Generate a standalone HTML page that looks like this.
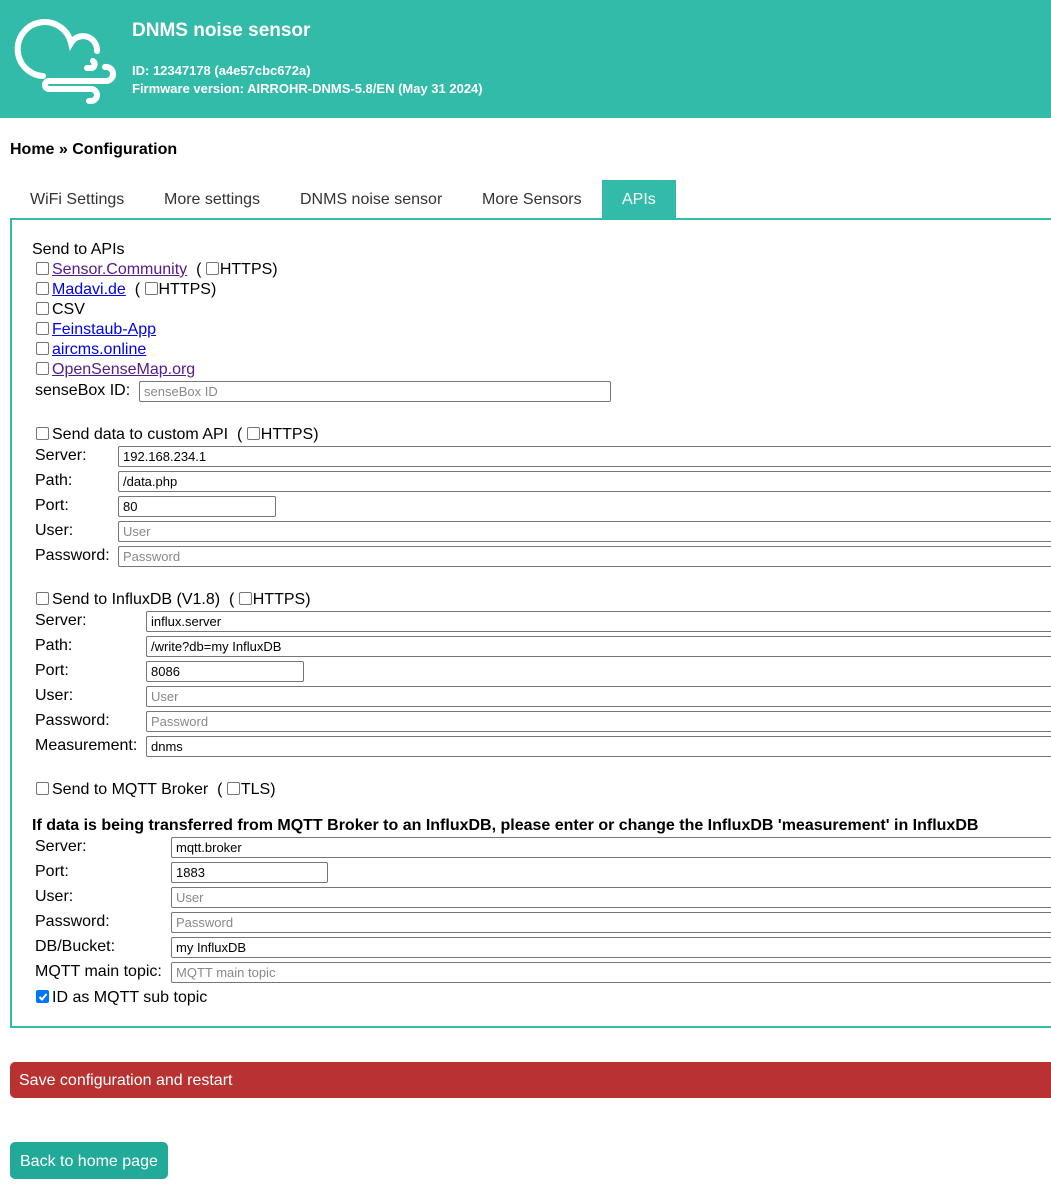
<!DOCTYPE html>
<html><head><meta charset="utf-8"><style>
*{margin:0;padding:0;box-sizing:border-box}
body{width:1051px;height:1199px;overflow:hidden;background:#fff;font-family:"Liberation Sans",Arial,sans-serif;font-size:16px;color:#000;position:relative}
.a{position:absolute;white-space:nowrap;line-height:20px;margin-top:2px}
.hd{position:absolute;left:0;top:0;width:1051px;height:118px;background:#33bbaa}
.cb{display:inline-block;width:13px;height:13px;border:1px solid #767676;border-radius:2px;background:#fff;vertical-align:-1px;margin-right:3px}
.in{position:absolute;height:21px;border:1px solid #767676;border-radius:2px;font-size:13px;line-height:19px;padding-left:4px;background:#fff;color:#000;white-space:nowrap}
.ph{color:#888}
a{color:#0000ee;text-decoration:underline}
a.v{color:#551a8b}
</style></head><body>
<div class="hd"></div>
<svg style="position:absolute;left:0;top:0" width="130" height="118" viewBox="0 0 130 118" fill="none" stroke="#fff" stroke-width="6" stroke-linecap="round">
<g transform="translate(5,3)">
<path d="M38,73 A27,27 0 1 1 66,40 A14,14 0 0 1 92,48"/>
<path d="M82,65 H87 A4,4 0 0 0 88,58"/>
<path d="M44,78 H102 A7,7 0 1 0 100,64"/>
<path d="M44,86 H86 A6,6 0 0 1 86,98 H84"/>
<path d="M44,78 A4,4 0 0 0 44,86"/>
</g>
</svg>
<div class="a" style="left:132px;top:19px;color:#fff;font-weight:bold;font-size:19px">DNMS noise sensor</div>
<div class="a" style="left:132px;top:59px;color:#fff;font-weight:bold;font-size:13px">ID: 12347178 (a4e57cbc672a)</div>
<div class="a" style="left:132px;top:77px;color:#fff;font-weight:bold;font-size:13px">Firmware version: AIRROHR-DNMS-5.8/EN (May 31 2024)</div>
<div class="a" style="left:10px;top:138px;font-weight:bold">Home » Configuration</div>

<div class="a" style="left:30px;top:188px;color:#333">WiFi Settings</div>
<div class="a" style="left:164px;top:188px;color:#333">More settings</div>
<div class="a" style="left:300px;top:188px;color:#333">DNMS noise sensor</div>
<div class="a" style="left:482px;top:188px;color:#333">More Sensors</div>
<div style="position:absolute;left:602px;top:180px;width:74px;height:38px;background:#33bbaa"></div>
<div class="a" style="left:622px;top:188px;color:#fff">APIs</div>
<div style="position:absolute;left:10px;top:218px;width:1060px;height:810px;border:2px solid #33bbaa"></div>

<div class="a" style="left:32px;top:238px">Send to APIs</div>
<div class="a" style="left:36px;top:258px"><span class="cb"></span><a class="v">Sensor.Community</a>&nbsp; ( <span class="cb" style="margin-right:1px"></span>HTTPS)</div>
<div class="a" style="left:36px;top:278px"><span class="cb"></span><a>Madavi.de</a>&nbsp; ( <span class="cb" style="margin-right:1px"></span>HTTPS)</div>
<div class="a" style="left:36px;top:298px"><span class="cb"></span>CSV</div>
<div class="a" style="left:36px;top:318px"><span class="cb"></span><a>Feinstaub-App</a></div>
<div class="a" style="left:36px;top:338px"><span class="cb"></span><a>aircms.online</a></div>
<div class="a" style="left:36px;top:358px"><span class="cb"></span><a class="v">OpenSenseMap.org</a></div>
<div class="a" style="left:35px;top:379px">senseBox ID:</div>
<div class="in ph" style="left:139px;top:381px;width:472px">senseBox ID</div>

<div class="a" style="left:36px;top:423px"><span class="cb"></span>Send data to custom API&nbsp; ( <span class="cb" style="margin-right:1px"></span>HTTPS)</div>
<div class="a" style="left:35px;top:444px">Server:</div><div class="in" style="left:118px;top:446px;width:950px">192.168.234.1</div>
<div class="a" style="left:35px;top:469px">Path:</div><div class="in" style="left:118px;top:471px;width:950px">/data.php</div>
<div class="a" style="left:35px;top:494px">Port:</div><div class="in" style="left:118px;top:496px;width:158px">80</div>
<div class="a" style="left:35px;top:519px">User:</div><div class="in ph" style="left:118px;top:521px;width:950px">User</div>
<div class="a" style="left:35px;top:544px">Password:</div><div class="in ph" style="left:118px;top:546px;width:950px">Password</div>

<div class="a" style="left:36px;top:588px"><span class="cb"></span>Send to InfluxDB (V1.8)&nbsp; ( <span class="cb" style="margin-right:1px"></span>HTTPS)</div>
<div class="a" style="left:35px;top:609px">Server:</div><div class="in" style="left:146px;top:611px;width:950px">influx.server</div>
<div class="a" style="left:35px;top:634px">Path:</div><div class="in" style="left:146px;top:636px;width:950px">/write?db=my InfluxDB</div>
<div class="a" style="left:35px;top:659px">Port:</div><div class="in" style="left:146px;top:661px;width:158px">8086</div>
<div class="a" style="left:35px;top:684px">User:</div><div class="in ph" style="left:146px;top:686px;width:950px">User</div>
<div class="a" style="left:35px;top:709px">Password:</div><div class="in ph" style="left:146px;top:711px;width:950px">Password</div>
<div class="a" style="left:35px;top:734px">Measurement:</div><div class="in" style="left:146px;top:736px;width:950px">dnms</div>

<div class="a" style="left:36px;top:778px"><span class="cb"></span>Send to MQTT Broker&nbsp; ( <span class="cb" style="margin-right:1px"></span>TLS)</div>
<div class="a" style="left:32px;top:814px;font-weight:bold">If data is being transferred from MQTT Broker to an InfluxDB, please enter or change the InfluxDB 'measurement' in InfluxDB</div>
<div class="a" style="left:35px;top:835px">Server:</div><div class="in" style="left:171px;top:837px;width:950px">mqtt.broker</div>
<div class="a" style="left:35px;top:860px">Port:</div><div class="in" style="left:171px;top:862px;width:157px">1883</div>
<div class="a" style="left:35px;top:885px">User:</div><div class="in ph" style="left:171px;top:887px;width:950px">User</div>
<div class="a" style="left:35px;top:910px">Password:</div><div class="in ph" style="left:171px;top:912px;width:950px">Password</div>
<div class="a" style="left:35px;top:935px">DB/Bucket:</div><div class="in" style="left:171px;top:937px;width:950px">my InfluxDB</div>
<div class="a" style="left:35px;top:960px">MQTT main topic:</div><div class="in ph" style="left:171px;top:962px;width:950px">MQTT main topic</div>
<div class="a" style="left:36px;top:986px"><span class="cb" style="background:#0075ff;border-color:#0075ff;position:relative"><svg style="position:absolute;left:1px;top:1px" width="10" height="10" viewBox="0 0 10 10"><path d="M1.5,5 L4,7.5 L8.5,2" stroke="#fff" stroke-width="2" fill="none"/></svg></span>ID as MQTT sub topic</div>

<div style="position:absolute;left:10px;top:1062px;width:1060px;height:36px;background:#b83232;border-radius:5px"></div>
<div class="a" style="left:19px;top:1069px;color:#fff">Save configuration and restart</div>
<div style="position:absolute;left:10px;top:1142px;width:158px;height:37px;background:#22aa99;border-radius:5px"></div>
<div class="a" style="left:20px;top:1150px;color:#fff">Back to home page</div>
</body></html>
